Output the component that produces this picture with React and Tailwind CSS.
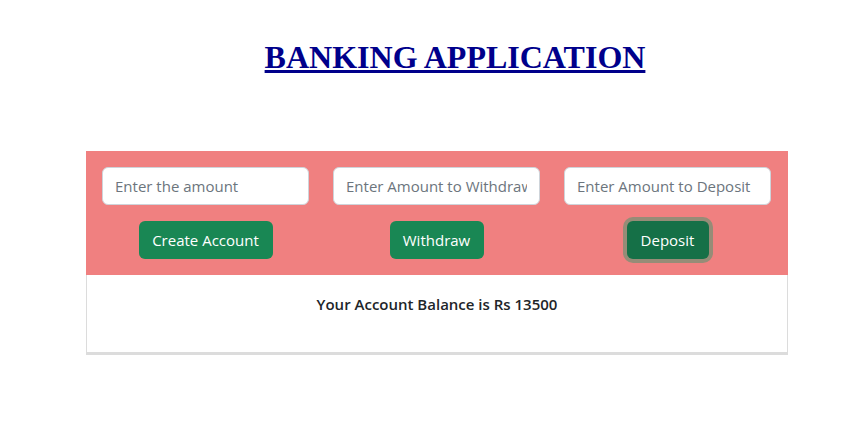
import React from 'react'

const Field = ({ placeholder }) => (
  <input
    type="text"
    placeholder={placeholder}
    className="w-full h-[38px] px-3 bg-white border border-[#ced4da] rounded-md text-[15px] text-[#212529] placeholder:text-[#6c757d] outline-none"
  />
)

const App = () => {
  const columns = [
    { placeholder: 'Enter the amount', label: 'Create Account', width: 'w-[134px]' },
    { placeholder: 'Enter Amount to Withdraw', label: 'Withdraw', width: 'w-[94px]' },
    { placeholder: 'Enter Amount to Deposit', label: 'Deposit', width: 'w-[82px]', active: true },
  ]

  return (
    <div className="w-[867px] h-[425px] pt-[39px] bg-white font-['Open_Sans',sans-serif]">
      <h1 className="pl-[43px] text-center text-[32px] leading-[37px] font-bold underline text-[#00008b] font-['Liberation_Serif',serif]">
        BANKING APPLICATION
      </h1>

      <div className="ml-[86px] mt-[75px] w-[702px] border border-b-[3px] border-[#dcdcdc] bg-white">
        <div className="grid grid-cols-3 gap-6 pl-4 pr-[17px] pt-4 pb-4 bg-[#f08080] -mx-px -mt-px">
          {columns.map((col) => (
            <div key={col.label} className="flex flex-col items-center gap-4">
              <Field placeholder={col.placeholder} />
              <button
                className={`${col.width} h-[38px] rounded-md text-[15px] text-white ${
                  col.active
                    ? 'bg-[#157047] shadow-[0_0_0_4px_#968c77]'
                    : 'bg-[#198754]'
                }`}
              >
                {col.label}
              </button>
            </div>
          ))}
        </div>
        <div className="h-[77px] pt-[18px] text-center text-[15px] font-semibold text-[#212529]">
          Your Account Balance is Rs 13500
        </div>
      </div>
    </div>
  )
}

export default App
